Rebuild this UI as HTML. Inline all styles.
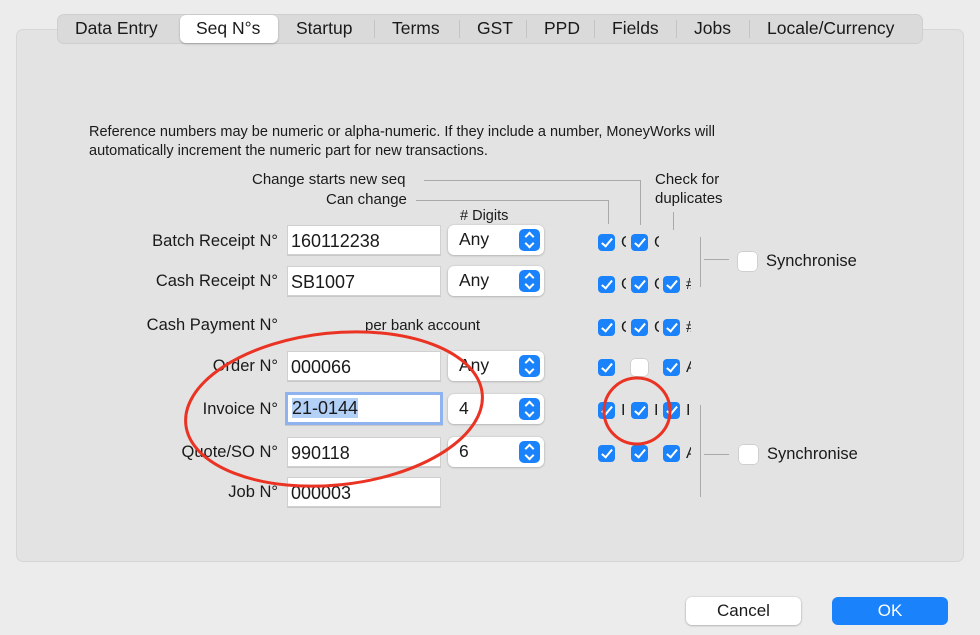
<!DOCTYPE html>
<html><head><meta charset="utf-8"><style>
*{box-sizing:border-box}
body{margin:0;width:980px;height:635px;background:#ececec;font-family:"Liberation Sans",sans-serif;color:#1a1a1a;position:relative;overflow:hidden}
.a{position:absolute}
.panel{left:16px;top:29px;width:948px;height:533px;background:#e3e3e3;border:1px solid #d6d6d6;border-radius:7px}
.tabs{left:57px;top:14px;width:866px;height:30px;background:#dadada;border:1px solid #cfcfcf;border-radius:7px}
.tab{position:absolute;top:19px;font-size:17.5px;line-height:18px}
.sep{position:absolute;top:20px;width:1px;height:18px;background:#c4c4c4}
.sel{left:180px;top:15px;width:98px;height:28px;background:#fff;border-radius:6px;box-shadow:0 1px 2px rgba(0,0,0,.25)}
.lbl{font-size:16.5px;text-align:right;width:200px}
.fld{background:#fff;width:154px;height:30px;border:1px solid #d0d0d0;box-shadow:0 1px 0 #c8c8c8;font-size:18px;padding:5px 0 0 3px}
.pop{width:96px;height:30px;background:#fff;border-radius:6px;box-shadow:0 0.5px 2px rgba(0,0,0,.3);font-size:17.5px;padding:4px 0 0 11px}
.pop i{position:absolute;right:4px;top:4px;width:21px;height:22px;background:#1a82fb;border-radius:5px}
.pop i:before{content:"";position:absolute;left:7px;top:4px;width:5px;height:5px;border-left:2px solid #fff;border-top:2px solid #fff;transform:rotate(45deg)}
.pop i:after{content:"";position:absolute;left:7px;top:11px;width:5px;height:5px;border-right:2px solid #fff;border-bottom:2px solid #fff;transform:rotate(45deg)}
.cb{width:17px;height:17px;background:#1a82fb;border-radius:4px}
.cb:after{content:"";position:absolute;left:5.5px;top:2px;width:4px;height:9px;border-right:2px solid #fff;border-bottom:2px solid #fff;transform:rotate(40deg)}
.cb.off{background:#fff;box-shadow:0 0 0 .5px #bbb}
.cb.off:after{display:none}
.fr{position:absolute;width:5px;overflow:hidden;font-size:16px;line-height:18px}
.tr{font-size:15px}
.ln{background:#a9a9a9}
.btn{height:28px;border-radius:6px;font-size:17px;text-align:center;line-height:28px}
</style></head><body>
<div class="a panel"></div>
<div class="a tabs"></div>
<div class="a sel"></div>
<div class="tab" style="left:75px">Data Entry</div>
<div class="tab" style="left:196px">Seq N°s</div>
<div class="tab" style="left:296px">Startup</div>
<div class="sep" style="left:374px"></div>
<div class="tab" style="left:392px">Terms</div>
<div class="sep" style="left:459px"></div>
<div class="tab" style="left:477px">GST</div>
<div class="sep" style="left:526px"></div>
<div class="tab" style="left:544px">PPD</div>
<div class="sep" style="left:594px"></div>
<div class="tab" style="left:612px">Fields</div>
<div class="sep" style="left:676px"></div>
<div class="tab" style="left:694px">Jobs</div>
<div class="sep" style="left:749px"></div>
<div class="tab" style="left:767px">Locale/Currency</div>

<div class="a" style="left:89px;top:123px;font-size:14.5px;line-height:19px">Reference numbers may be numeric or alpha-numeric. If they include a number, MoneyWorks will<br>automatically increment the numeric part for new transactions.</div>

<div class="a tr" style="left:252px;top:171px">Change starts new seq</div>
<div class="a ln" style="left:424px;top:180px;width:217px;height:1px"></div>
<div class="a ln" style="left:640px;top:180px;width:1px;height:45px"></div>
<div class="a tr" style="left:326px;top:191px">Can change</div>
<div class="a ln" style="left:416px;top:200px;width:193px;height:1px"></div>
<div class="a ln" style="left:608px;top:200px;width:1px;height:24px"></div>
<div class="a tr" style="left:655px;top:170px;line-height:19px">Check for<br>duplicates</div>
<div class="a ln" style="left:673px;top:212px;width:1px;height:18px"></div>
<div class="a tr" style="left:460px;top:208px;font-size:14.5px"># Digits</div>

<div class="a lbl" style="left:78px;top:232px">Batch Receipt N°</div>
<div class="a fld" style="left:287px;top:225px">160112238</div>
<div class="a pop" style="left:448px;top:225px">Any<i></i></div>
<div class="a lbl" style="left:78px;top:272px">Cash Receipt N°</div>
<div class="a fld" style="left:287px;top:266px">SB1007</div>
<div class="a pop" style="left:448px;top:266px">Any<i></i></div>
<div class="a lbl" style="left:78px;top:316px">Cash Payment N°</div>
<div class="a" style="left:365px;top:317px;font-size:15px">per bank account</div>
<div class="a lbl" style="left:78px;top:357px">Order N°</div>
<div class="a fld" style="left:287px;top:351px">000066</div>
<div class="a pop" style="left:448px;top:351px">Any<i></i></div>
<div class="a lbl" style="left:78px;top:400px">Invoice N°</div>
<div class="a fld" style="left:285px;top:392px;width:158px;height:33px;border:3px solid #8eb3ee;padding:3px 0 0 4px"><span style="background:#b3d1f7">21-0144</span></div>
<div class="a pop" style="left:448px;top:394px">4<i></i></div>
<div class="a lbl" style="left:78px;top:443px">Quote/SO N°</div>
<div class="a fld" style="left:287px;top:437px">990118</div>
<div class="a pop" style="left:448px;top:437px">6<i></i></div>
<div class="a lbl" style="left:78px;top:483px">Job N°</div>
<div class="a fld" style="left:287px;top:477px">000003</div>

<div class="a cb" style="left:598px;top:234px"></div><div class="a cb" style="left:631px;top:234px"></div>
<div class="fr" style="left:621px;top:234px">C</div><div class="fr" style="left:654px;top:234px">C</div>
<div class="a cb" style="left:598px;top:276px"></div><div class="a cb" style="left:631px;top:276px"></div><div class="a cb" style="left:663px;top:276px"></div>
<div class="fr" style="left:621px;top:276px">C</div><div class="fr" style="left:654px;top:276px">C</div><div class="fr" style="left:686px;top:276px">#</div>
<div class="a cb" style="left:598px;top:319px"></div><div class="a cb" style="left:631px;top:319px"></div><div class="a cb" style="left:663px;top:319px"></div>
<div class="fr" style="left:621px;top:319px">C</div><div class="fr" style="left:654px;top:319px">C</div><div class="fr" style="left:686px;top:319px">#</div>
<div class="a cb" style="left:598px;top:359px"></div><div class="a cb off" style="left:631px;top:359px"></div><div class="a cb" style="left:663px;top:359px"></div>
<div class="fr" style="left:686px;top:359px">A</div>
<div class="a cb" style="left:598px;top:402px"></div><div class="a cb" style="left:631px;top:402px"></div><div class="a cb" style="left:663px;top:402px"></div>
<div class="fr" style="left:621px;top:402px">I</div><div class="fr" style="left:654px;top:402px">I</div><div class="fr" style="left:686px;top:402px">I</div>
<div class="a cb" style="left:598px;top:445px"></div><div class="a cb" style="left:631px;top:445px"></div><div class="a cb" style="left:663px;top:445px"></div>
<div class="fr" style="left:686px;top:445px">A</div>

<div class="a ln" style="left:700px;top:237px;width:1px;height:50px"></div>
<div class="a ln" style="left:704px;top:259px;width:25px;height:1px"></div>
<div class="a cb off" style="left:738px;top:252px;width:19px;height:19px"></div>
<div class="a" style="left:766px;top:252px;font-size:16.5px">Synchronise</div>
<div class="a ln" style="left:700px;top:405px;width:1px;height:92px"></div>
<div class="a ln" style="left:704px;top:454px;width:25px;height:1px"></div>
<div class="a cb off" style="left:739px;top:445px;width:19px;height:19px"></div>
<div class="a" style="left:767px;top:445px;font-size:16.5px">Synchronise</div>

<svg class="a" style="left:0;top:0" width="980" height="635">
<ellipse cx="334" cy="409" rx="149" ry="76" transform="rotate(-6 334 409)" fill="none" stroke="#ea3323" stroke-width="3"/>
<circle cx="637" cy="411" r="33" fill="none" stroke="#ea3323" stroke-width="3"/>
</svg>

<div class="a btn" style="left:686px;top:597px;width:115px;background:#fff;box-shadow:0 .5px 2px rgba(0,0,0,.35)">Cancel</div>
<div class="a btn" style="left:832px;top:597px;width:116px;background:#1a82fb;color:#fff">OK</div>
</body></html>
